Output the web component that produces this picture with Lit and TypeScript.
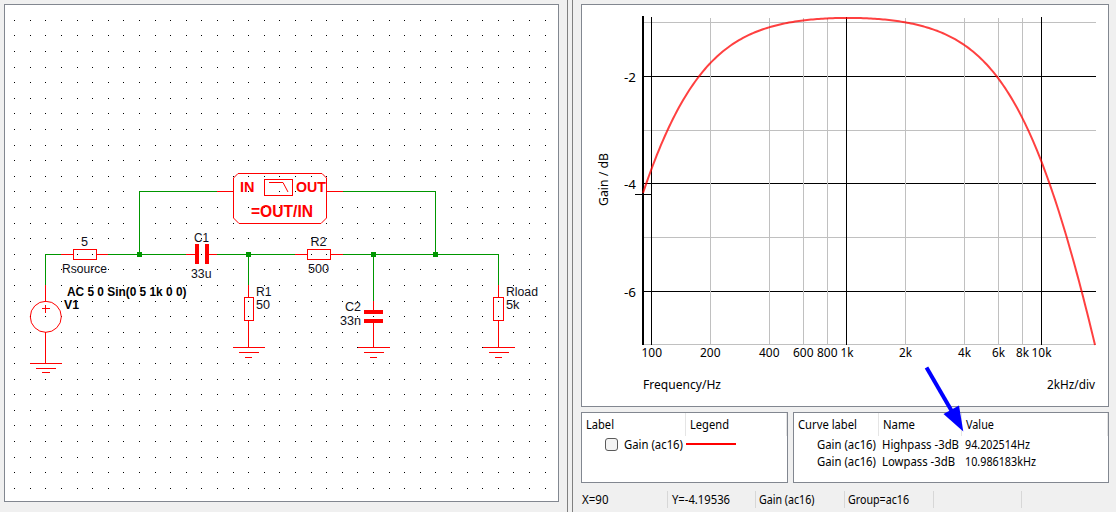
import { LitElement, html, svg, css } from "lit";
import { customElement } from "lit/decorators.js";

type Seg = [number, number, number, number];
type Label = [string, number, number, number, string?];

const range = (n: number) => Array.from({ length: n }, (_, i) => i);

// One-pixel strokes expressed as filled rectangles so that edges stay crisp.
const strokes = (segs: Seg[], cls: string) =>
  segs.map(([x1, y1, x2, y2]) => svg`<rect class=${cls} x=${x1} y=${y1} width=${x2 - x1 + 1} height=${y2 - y1 + 1}></rect>`);

const labels = (items: Label[]) =>
  items.map(([t, x, y, w, c]) => svg`<text class=${c ?? ""} x=${x} y=${y} textLength=${w} lengthAdjust="spacingAndGlyphs">${t}</text>`);

@customElement("circuit-sheet")
export class CircuitSheet extends LitElement {
  static styles = css`
    :host { display: block; background: #fff; border: 1px solid #828790; overflow: hidden; }
    svg { display: block; width: 100%; height: 100%; }
    text { font: 12.5px "Liberation Sans", Arial, sans-serif; fill: #101018; }
    .b { font-weight: bold; font-size: 12.5px; fill: #000; }
    .pin { font-weight: bold; font-size: 14px; fill: #f00; }
    .fn { font-weight: bold; font-size: 16.5px; fill: #f00; }
    .wire { fill: #009600; }
    .part { fill: #f00; }
    .dot { fill: #000; }
    .outline { fill: none; stroke: #f00; }
  `;

  private wires: Seg[] = [
    [139, 191, 216, 191], [343, 191, 435, 191], [139, 191, 139, 254], [435, 191, 435, 254],
    [45, 254, 60, 254], [108, 254, 185, 254], [217, 254, 294, 254], [343, 254, 498, 254],
    [45, 254, 45, 284], [248, 254, 248, 284], [373, 254, 373, 300], [498, 254, 498, 284],
    ...[139, 248, 373, 435].map((x): Seg => [x - 2, 252, x + 2, 256]),
  ];

  private parts: Seg[] = [
    [217, 191, 232, 191], [327, 191, 342, 191],
    [61, 254, 73, 254], [97, 254, 107, 254], [186, 254, 195, 254], [209, 254, 216, 254],
    [295, 254, 307, 254], [331, 254, 342, 254],
    [195, 244, 198, 263], [205, 244, 208, 263],
    [364, 310, 382, 313], [364, 319, 382, 322],
    [45, 285, 45, 301], [45, 332, 45, 363], [42, 308, 49, 308], [45, 305, 45, 312],
    [248, 285, 248, 297], [248, 320, 248, 347],
    [498, 285, 498, 297], [498, 320, 498, 347],
    [373, 301, 373, 310], [373, 322, 373, 347],
    [30, 363, 61, 363], [36, 368, 55, 368], [42, 372, 49, 372],
    ...[248, 373, 498].flatMap((x): Seg[] => [
      [x - 15, 347, x + 16, 347], [x - 9, 352, x + 10, 352], [x - 3, 357, x + 3, 357],
    ]),
  ];

  private text: Label[] = [
    ["5", 81, 246, 7], ["Rsource", 62, 273, 45], ["C1", 194, 242, 15], ["33u", 191, 278, 20.5],
    ["AC 5 0 Sin(0 5 1k 0 0)", 67, 296, 119.5, "b"], ["V1", 64, 309, 15, "b"],
    ["R1", 256, 296, 15.5], ["50", 256, 309, 14], ["R2", 310.5, 246, 16], ["500", 308, 273, 21],
    ["C2", 345, 311, 16], ["33n", 340, 325, 21], ["Rload", 506, 296, 32], ["5k", 506, 309, 13.5],
    ["IN", 240, 192, 14.5, "pin"], ["OUT", 296, 192, 30, "pin"], ["=OUT/IN", 251, 217, 62, "fn"],
  ];

  render() {
    return html`<svg viewBox="5 5 553 496">
      ${range(31).flatMap((r) => range(35).map((c) => svg`<rect class="dot" x=${Math.floor(14.6 + 15.6 * c)} y=${Math.floor(20.3 + 15.6 * r)} width="1" height="1"></rect>`))}
      ${strokes(this.parts, "part")} ${strokes(this.wires, "wire")}
      <rect class="outline" x="73.5" y="249.5" width="23" height="10" />
      <rect class="outline" x="307.5" y="249.5" width="23" height="10" />
      <rect class="outline" x="244.5" y="297.5" width="9" height="23" />
      <rect class="outline" x="493.5" y="297.5" width="10" height="23" />
      <circle class="outline" cx="45.8" cy="316.8" r="15.5" />
      <path class="outline" d="M238 173.5H322L326.5 178V218L321 223.5H239L233.5 218V178Z" stroke-linejoin="round" />
      <rect class="outline" x="264.5" y="179.5" width="28" height="16" />
      <path class="outline" d="M269 182.5H283L288 192" />
      ${labels(this.text)}
    </svg>`;
  }
}

@customElement("gain-plot")
export class GainPlot extends LitElement {
  static styles = css`
    :host { display: block; background: #fff; border: 1px solid #828790; overflow: hidden; }
    svg { display: block; width: 100%; height: 100%; }
    text { font: 12px "Noto Sans", "Open Sans", sans-serif; fill: #000; }
    .major { fill: #000; }
    .minor { fill: #c0c0c0; }
    .curve { fill: none; stroke: #f00; stroke-opacity: 0.75; stroke-width: 2; }
  `;

  // Transfer function of the band-pass: C1/R1 high-pass, then R2 into C2 || Rload.
  private gainDb(f: number): number {
    const w = 2 * Math.PI * f;
    const g = 1 / 5000, b = w * 33e-9;
    const d = g * g + b * b;
    const lr = g / d, li = -b / d;
    const sr = 500 + lr, si = li;
    const stage2 = Math.hypot(lr, li) / Math.hypot(sr, si);
    const s = sr * sr + si * si;
    const yr = 1 / 50 + sr / s, yi = -si / s;
    const y = yr * yr + yi * yi;
    const pr = yr / y, pi = -yi / y;
    const stage1 = Math.hypot(pr, pi) / Math.hypot(pr, pi - 1 / (w * 33e-6));
    return 20 * Math.log10(stage1 * stage2);
  }

  private curve(): string {
    return range(227).map((i) => {
      const x = 643 + i * 2;
      const f = 10 ** (2 + (x - 651.5) / 195);
      const y = 22.5 + (-1 - this.gainDb(f)) * 53.72;
      return `${x},${Math.min(y, 345).toFixed(2)}`;
    }).join(" ");
  }

  render() {
    const ticks: Label[] = [
      ["100", 641.5, 357, 20.5], ["200", 700, 357, 20.5], ["400", 759, 357, 20.5], ["600", 793, 357, 20.5],
      ["800", 817, 357, 20.5], ["1k", 840.5, 357, 13], ["2k", 899, 357, 13], ["4k", 958, 357, 13],
      ["6k", 992, 357, 13], ["8k", 1016, 357, 13], ["10k", 1031.5, 357, 20],
      ["-2", 624, 81.5, 12], ["-4", 624, 188.5, 12], ["-6", 624, 296.5, 12],
      ["Frequency/Hz", 643, 389, 78], ["2kHz/div", 1047, 389, 48],
    ];
    return html`<svg viewBox="582 5 526 401">
      ${strokes([22, 130, 237, 344].map((y): Seg => [643, y, 1095, y]), "minor")}
      ${strokes([76, 183, 291].map((y): Seg => [643, y, 1095, y]), "major")}
      ${strokes([710, 769, 803, 827, 905, 964, 998, 1022].map((x): Seg => [x, 18, x, 344]), "minor")}
      ${strokes([651, 846, 1041].map((x): Seg => [x, 17, x, 344]), "major")}
      ${strokes([[642, 16, 643, 344], [635, 194, 650, 194]], "major")}
      <polyline class="curve" points=${this.curve()} />
      ${labels(ticks)}
      <text transform="translate(608 206) rotate(-90)" textLength="53" lengthAdjust="spacingAndGlyphs">Gain / dB</text>
    </svg>`;
  }
}

@customElement("app-root")
export class AppRoot extends LitElement {
  static styles = css`
    :host { display: grid; grid-template-columns: 567px 6px 543px; height: 512px; background: #f0f0f0; overflow: hidden; position: relative;
      font: 12px/17px "Noto Sans", "Open Sans", sans-serif; color: #000; white-space: nowrap; }
    * { box-sizing: border-box; }
    .left { padding: 4px 8px 10px 4px; }
    circuit-sheet { width: 555px; height: 498px; box-sizing: border-box; }
    .splitter { border: solid #808080; border-width: 0 1px; }
    .right { padding: 4px 7px 4px 8px; display: flex; flex-direction: column; }
    gain-plot { width: 528px; height: 403px; box-sizing: border-box; }
    .tables { display: flex; gap: 5px; margin-top: 5px; height: 71px; }
    .table { background: #fff; border: 1px solid #828790; }
    .legend { width: 207px; }
    .values { width: 316px; }
    .head { display: flex; height: 23px; line-height: 23px; }
    .cell { border-right: 1px solid #e5e5e5; padding-left: 4px; height: 23px; }
    .row { display: flex; height: 17px; align-items: center; }
    .c1 { width: 104px; }
    .c2 { width: 101px; }
    .v1 { width: 85px; }
    .v2 { width: 83px; }
    .v3 { width: 146px; }
    .check { width: 13px; height: 13px; border: 1px solid #5a5a5a; border-radius: 3px; background: #f4f4f4; margin: 0 6px 0 23px; }
    .swatch { width: 50px; height: 2px; background: #f00; margin: -1px 0 0 3px; }
    .fit { display: block; height: 17px; overflow: visible; flex: none; }
    .fit text { fill: #000; font: 12px "Noto Sans", "Open Sans", sans-serif; }
    .head .fit { margin-top: 3px; }
    .r1 { width: 65px; padding-left: 23px; box-sizing: content-box; }
    .r2 { width: 83px; }
    .status { display: flex; height: 17px; margin-top: 8px; }
    .status > div { height: 17px; border-right: 1px solid #d7d7d7; }
    .s1 { width: 87px; padding-left: 1px; }
    .s2 { width: 88px; padding-left: 3.5px; }
    .s3 { width: 89px; padding-left: 3px; }
    .s4 { width: 89px; padding-left: 3px; }
    .s5 { width: 88px; }
    .arrow { position: absolute; left: 920px; top: 360px; width: 50px; height: 76px; fill: #00f; stroke: #00f; }
  `;

  private fit(text: string, w: number) {
    return html`<svg class="fit" width=${w} height="17"><text x="0" y="13" textLength=${w} lengthAdjust="spacingAndGlyphs">${text}</text></svg>`;
  }

  private valueRow(name: string, nameW: number, value: string, valueW: number) {
    return html`<div class="row">
      <div class="r1">${this.fit("Gain (ac16)", 59)}</div>
      <div class="r2">${this.fit(name, nameW)}</div>
      ${this.fit(value, valueW)}
    </div>`;
  }

  render() {
    return html`
      <div class="left"><circuit-sheet></circuit-sheet></div>
      <div class="splitter"></div>
      <div class="right">
        <gain-plot></gain-plot>
        <div class="tables">
          <div class="table legend">
            <div class="head">
              <div class="cell c1">${this.fit("Label", 28)}</div>
              <div class="cell c2">${this.fit("Legend", 39)}</div>
            </div>
            <div class="row"><div class="check"></div>${this.fit("Gain (ac16)", 59)}<div class="swatch"></div></div>
          </div>
          <div class="table values">
            <div class="head">
              <div class="cell v1">${this.fit("Curve label", 59)}</div>
              <div class="cell v2">${this.fit("Name", 32)}</div>
              <div class="cell v3">${this.fit("Value", 28)}</div>
            </div>
            ${this.valueRow("Highpass -3dB", 77, "94.202514Hz", 65)}
            ${this.valueRow("Lowpass -3dB", 73, "10.986183kHz", 71)}
          </div>
        </div>
        <div class="status">
          <div class="s1">${this.fit("X=90", 26.5)}</div>
          <div class="s2">${this.fit("Y=-4.19536", 58)}</div>
          <div class="s3">${this.fit("Gain (ac16)", 55.5)}</div>
          <div class="s4">${this.fit("Group=ac16", 61)}</div>
          <div class="s5"></div>
        </div>
      </div>
      <svg class="arrow" viewBox="920 360 50 76">
        <path d="M926.5 367.5L952 411.5" stroke-width="4" />
        <path d="M943.5 414L959 405.5L963.3 431.5Z" stroke="none" />
      </svg>`;
  }
}
